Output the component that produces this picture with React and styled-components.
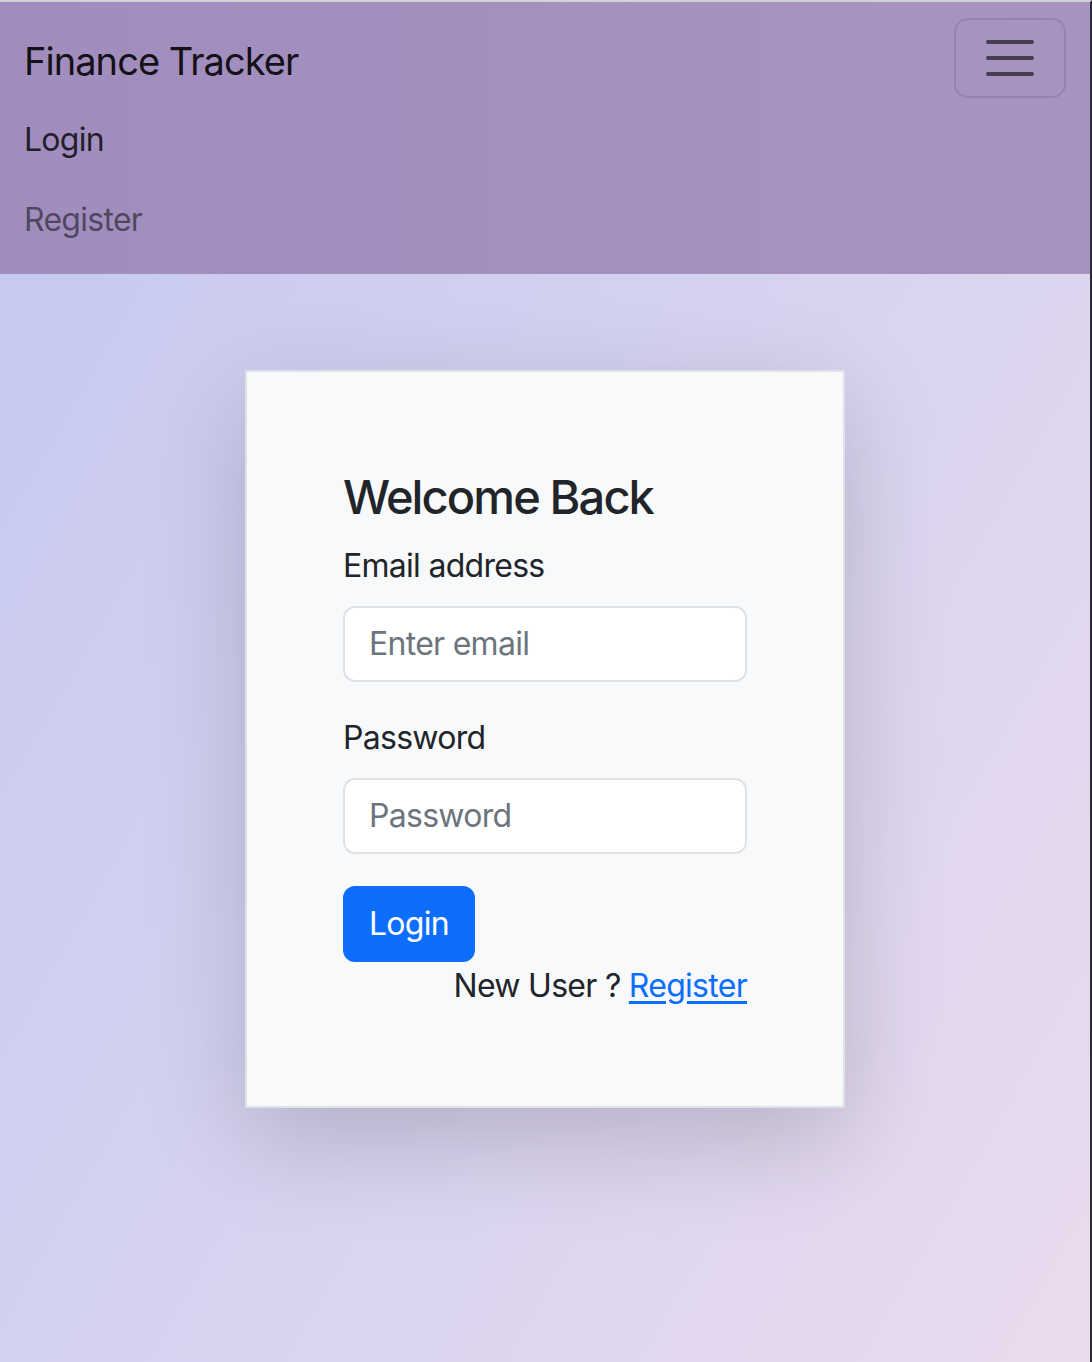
import React from 'react';
import styled, { createGlobalStyle } from 'styled-components';

const GlobalStyle = createGlobalStyle`
  * {
    box-sizing: border-box;
  }

  body {
    margin: 0;
    font-family: Inter, "Noto Sans", "Liberation Sans", sans-serif;
    letter-spacing: -0.045em;
    color: #212529;
    background: #2b2b33;
  }
`;

const Page = styled.div`
  min-height: 1362px;
  border-top: 2px solid #d2d2d4;
  border-right: 2px solid #2b2b33;
  background: linear-gradient(120deg, #c5c7f1 0%, #d4d2f0 45%, #ebdbee 100%);
  display: flex;
  flex-direction: column;
`;

const Navbar = styled.nav`
  background: linear-gradient(90deg, #a08dbe 0%, #a591bf 60%, #a994c1 100%);
  padding: 16px 24px;
  display: flex;
  flex-direction: column;
`;

const NavTop = styled.div`
  display: flex;
  align-items: center;
  justify-content: space-between;
`;

const Brand = styled.a`
  font-size: 38px;
  line-height: 60px;
  padding: 13px 0 7px;
  letter-spacing: -0.025em;
  color: rgba(0, 0, 0, 0.9);
  text-decoration: none;
`;

const Toggler = styled.button`
  width: 112px;
  height: 80px;
  padding: 8px 24px;
  border: 2px solid rgba(0, 0, 0, 0.1);
  border-radius: 14px;
  background: transparent;
  display: flex;
  align-items: center;
  justify-content: center;
  cursor: pointer;
`;

const NavList = styled.div`
  display: flex;
  flex-direction: column;
`;

const NavLink = styled.a`
  font-size: 32px;
  line-height: 48px;
  padding: 18px 0 14px;
  color: ${(p) => (p.$active ? 'rgba(0, 0, 0, 0.8)' : 'rgba(0, 0, 0, 0.5)')};
  text-decoration: none;
`;

const Main = styled.main`
  display: flex;
  justify-content: center;
  padding-top: 96px;
`;

const Card = styled.div`
  width: 600px;
  padding: 96px;
  background: #f8f9fa;
  border: 2px solid #dee2e6;
  box-shadow: 0 32px 96px rgba(0, 0, 0, 0.175);
`;

const Heading = styled.h3`
  margin: 0 0 16px;
  font-size: 47px;
  line-height: 57.6px;
  font-weight: 500;
  letter-spacing: -0.04em;
`;

const Field = styled.div`
  margin-bottom: 32px;
`;

const Label = styled.label`
  display: block;
  margin-bottom: 16px;
  font-size: 32px;
  line-height: 48px;
`;

const Input = styled.input`
  display: block;
  width: 100%;
  height: 76px;
  padding: 12px 24px;
  font-family: inherit;
  letter-spacing: inherit;
  font-size: 32px;
  line-height: 48px;
  color: #212529;
  background: #fff;
  border: 2px solid #dee2e6;
  border-radius: 12px;
  outline: none;

  &::placeholder {
    color: #6c757d;
  }
`;

const Button = styled.button`
  display: inline-block;
  padding: 12px 24px;
  font-family: inherit;
  letter-spacing: inherit;
  font-size: 32px;
  line-height: 48px;
  color: #fff;
  background: #0d6efd;
  border: 2px solid #0d6efd;
  border-radius: 12px;
  cursor: pointer;
`;

const Footer = styled.p`
  margin: 0;
  text-align: right;
  font-size: 32px;
  line-height: 48px;

  a {
    color: #0d6efd;
    text-decoration: underline;
    text-underline-offset: 4px;
  }
`;

function MenuIcon() {
  return (
    <svg width="60" height="60" viewBox="0 0 30 30" aria-hidden="true">
      <path
        d="M4 7h22M4 15h22M4 23h22"
        stroke="rgba(33, 37, 41, 0.75)"
        strokeWidth="2"
        strokeLinecap="round"
        strokeMiterlimit="10"
      />
    </svg>
  );
}

function App() {
  return (
    <>
      <GlobalStyle />
      <Page>
        <Navbar>
          <NavTop>
            <Brand href="#">Finance Tracker</Brand>
            <Toggler aria-label="Toggle navigation">
              <MenuIcon />
            </Toggler>
          </NavTop>
          <NavList>
            <NavLink $active href="#">Login</NavLink>
            <NavLink href="#">Register</NavLink>
          </NavList>
        </Navbar>
        <Main>
          <Card>
            <Heading>Welcome Back</Heading>
            <form onSubmit={(e) => e.preventDefault()}>
              <Field>
                <Label htmlFor="email">Email address</Label>
                <Input id="email" type="email" placeholder="Enter email" />
              </Field>
              <Field>
                <Label htmlFor="password">Password</Label>
                <Input id="password" type="password" placeholder="Password" />
              </Field>
              <Button type="submit">Login</Button>
            </form>
            <Footer>
              New User ? <a href="#">Register</a>
            </Footer>
          </Card>
        </Main>
      </Page>
    </>
  );
}

export default App;
